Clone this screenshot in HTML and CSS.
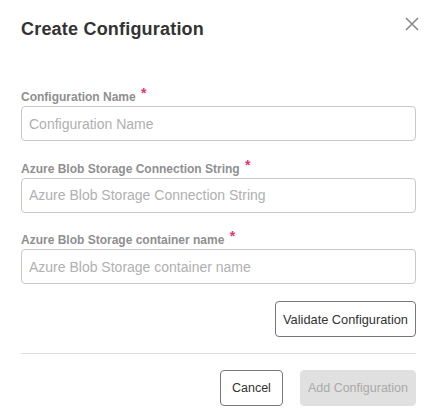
FILE: index.html
```html
<!DOCTYPE html>
<html>
<head>
<meta charset="utf-8">
<link rel="stylesheet" href="styles.css">
</head>
<body>
<div class="dialog">
  <div class="header">
    <h1 class="title">Create Configuration</h1>
    <button class="close" aria-label="Close">
      <svg width="14" height="14" viewBox="0 0 14 14"><path d="M1 1L13 13M13 1L1 13" stroke="#8a8a8a" stroke-width="1.6" fill="none"/></svg>
    </button>
  </div>
  <form class="form">
    <div class="field">
      <label class="label">Configuration Name <span class="req">*</span></label>
      <input class="input" placeholder="Configuration Name">
    </div>
    <div class="field">
      <label class="label">Azure Blob Storage Connection String <span class="req">*</span></label>
      <input class="input" placeholder="Azure Blob Storage Connection String">
    </div>
    <div class="field">
      <label class="label">Azure Blob Storage container name <span class="req">*</span></label>
      <input class="input" placeholder="Azure Blob Storage container name">
    </div>
    <div class="validate-row">
      <button type="button" class="btn btn-outline btn-validate">Validate Configuration</button>
    </div>
  </form>
  <div class="footer">
    <button class="btn btn-outline btn-cancel">Cancel</button>
    <button class="btn btn-disabled" disabled>Add Configuration</button>
  </div>
</div>
</body>
</html>
```

FILE: styles.css
```css
* { box-sizing: border-box; }
html, body { margin: 0; padding: 0; background: #fff; }
body { font-family: "Liberation Sans", Arial, sans-serif; color: #333; }
.dialog { width: 434px; padding: 0 18px 0 21px; }
.header { display: flex; justify-content: space-between; align-items: flex-start; padding-top: 17px; height: 86px; }
.title { margin: 0; font-size: 18px; letter-spacing: 0.2px; font-weight: bold; color: #333; line-height: 24px; }
.close { border: none; background: none; padding: 0; margin-right: -3px; width: 14px; height: 14px; display: flex; cursor: pointer; }
.form { display: flex; flex-direction: column; }
.field { display: flex; flex-direction: column; margin-bottom: 16px; }
.field + .field { margin-top: 0.5px; }
.label { font-size: 12px; font-weight: bold; color: #8f8f8f; line-height: 14px; height: 14px; margin-bottom: 6px; }
.req { color: #e8336e; font-size: 14px; vertical-align: 3px; margin-left: 2px; }
.input { width: 395px; height: 35px; border: 1px solid #c8c8c8; border-radius: 4px; padding: 0 7px; font-family: "Liberation Sans", Arial, sans-serif; font-size: 14px; color: #333; outline: none; }
.input::placeholder { color: #b0b0b0; }
.validate-row { display: flex; justify-content: flex-end; width: 395px; margin-top: 1px; }
.btn { font-family: "Liberation Sans", Arial, sans-serif; font-size: 12.5px; height: 36px; border-radius: 4px; padding: 0 7px; }
.btn-validate { font-size: 12.8px; }
.btn-outline { background: #fff; border: 1px solid #777; color: #333; }
.btn-cancel { min-width: 63px; }
.btn-disabled { background: #e0e0e0; border: 1px solid #e0e0e0; color: #aaa; }
.footer { width: 395px; margin-top: 16px; border-top: 1px solid #ddd; padding-top: 16px; display: flex; justify-content: flex-end; gap: 17px; }
```
